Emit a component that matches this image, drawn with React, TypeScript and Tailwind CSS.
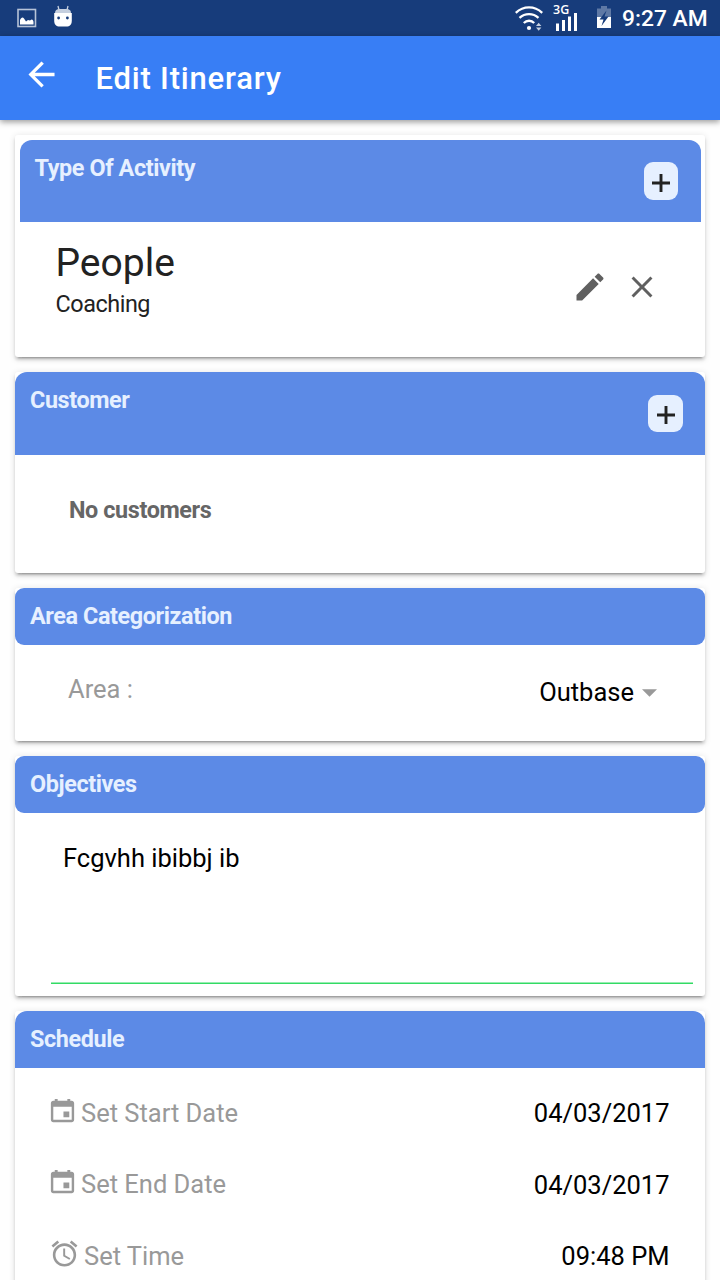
import type { ReactNode } from "react";
import { IoMdAlarm, IoMdArrowBack, IoMdCalendar, IoMdClose, IoMdCreate } from "react-icons/io";

function StatusBar() {
  return (
    <div className="flex h-9 shrink-0 items-start bg-[#173c7b] text-white">
      <svg className="ml-[17px] mt-2 h-5 w-5" viewBox="0 0 20 20">
        <rect x="1" y="1.5" width="17.5" height="17" fill="none" stroke="#b6c3d8" strokeWidth="1.6" />
        <path d="M3 16.500v-4.500c1-2 2.500-3.500 4-1.500l2 3 2-1.500 2 .5 1.500-1c1.500 0 2 1.500 2 2.500v2.500z" fill="#fff" />
      </svg>
      <svg className="ml-[16px] mt-[5px] h-[23px] w-5" viewBox="0 0 20 23">
        <path d="M5 1l1 4M15 1l-1 4" stroke="#c5cfdf" strokeWidth="1.300" />
        <path d="M2 8c0-3 2-4 4-4h8c2 0 4 1 4 4z" fill="#c5cfdf" />
        <path d="M1.200 8h17.600v7.500c0 4-2 6-5.500 6H6.700c-3.500 0-5.500-2-5.500-6z" fill="#fff" />
        <circle cx="5.600" cy="13" r="1.400" fill="#173c7b" />
        <circle cx="14.400" cy="13" r="1.400" fill="#173c7b" />
      </svg>
      <svg className="ml-auto mt-[5px] h-[26px] w-7" viewBox="0 0 28 26" fill="none" stroke="#fff" strokeWidth="2.300">
        <path d="M.8 7.800C8.500.6 19.500.6 27.200 7.800M4.500 12.800c5.500-5 13.500-5 19 0M8.800 18c3-3 7.500-3 10.400 0" />
        <circle cx="14" cy="23" r="2.100" fill="#fff" stroke="none" />
        <path d="M21 21l2.700-3.300 2.700 3.300zM21 22.500l2.700 3.300 2.700-3.300z" fill="#c5cfdf" stroke="none" />
      </svg>
      <div className="ml-[10px] mt-[3px] flex h-7 w-[26px] flex-col">
        <span className="font-['Open_Sans',sans-serif] text-[12.5px] font-semibold leading-[13px]">3G</span>
        <svg className="-mt-[3px] ml-[3px] h-[18px] w-[22px] shrink-0" viewBox="0 0 22 18">
          <path d="M0 10.500h3V18H0zM6 7h3v11H6zM12 3.500h3V18h-3zM18 0h3v18h-3z" fill="#fff" />
        </svg>
      </div>
      <svg className="ml-[18px] mt-[6px] h-[22px] w-[14px]" viewBox="0 0 14 22">
        <path d="M0 2.500h4V0h6v2.500h4V12H0z" fill="#5f79a5" />
        <path d="M0 11h14v11H0z" fill="#fff" />
        <path d="M9.500 4.500L2.500 13.500h4L4.500 20l7-9.500h-4z" fill="#173c7b" />
      </svg>
      <span className="ml-[11px] mr-3 w-[86px] whitespace-nowrap text-[22.8px] font-medium leading-[38px]">9:27 AM</span>
    </div>
  );
}

function Card({ className, children }: { className: string; children: ReactNode }) {
  return (
    <section
      className={`mx-[15px] flex shrink-0 flex-col rounded-[3px] bg-white shadow-[0_3px_3px_0_rgba(0,0,0,0.14),0_4.5px_1.5px_-3px_rgba(0,0,0,0.2),0_1.5px_7.500px_0_rgba(0,0,0,0.12)] ${className}`}
    >
      {children}
    </section>
  );
}

function CardTitle({ className, children }: { className: string; children: ReactNode }) {
  return (
    <div
      className={`flex shrink-0 justify-between bg-[#5c8ae6] pl-[15px] pt-[15px] text-[23.4px] font-bold leading-[26px] tracking-[-0.4px] text-[#e6f0ff] ${className}`}
    >
      {children}
    </div>
  );
}

function AddButton() {
  return (
    <button className="mt-[7.5px] mr-[22.5px] flex h-[37.5px] w-[34.5px] items-center justify-center rounded-[9px] bg-[#e6f0ff] pl-[1px] pt-[4px]">
      <svg className="h-[18px] w-[18px]" viewBox="0 0 18 18">
        <path d="M9 0v18M0 9h18" stroke="#222" strokeWidth="2.900" />
      </svg>
    </button>
  );
}

function ScheduleRow({
  icon,
  label,
  value,
  className,
  valueClassName,
}: {
  icon: ReactNode;
  label: string;
  value: string;
  className: string;
  valueClassName: string;
}) {
  return (
    <div className={`flex shrink-0 items-start justify-between pl-[32px] pr-[35.5px] ${className}`}>
      <div className="flex items-start text-[#999]">
        {icon}
        <span className="pt-[16px] leading-[31px]">{label}</span>
      </div>
      <span className={`leading-[31px] text-black ${valueClassName}`}>{value}</span>
    </div>
  );
}

export default function App() {
  return (
    <div className="flex h-[1280px] w-[720px] flex-col overflow-hidden bg-[#fefefe] font-[Roboto,sans-serif] text-[25.5px] text-[#222]">
      <StatusBar />
      <header className="flex h-[84px] shrink-0 items-center bg-[#387ef5] text-white shadow-[0_2px_6px_rgba(0,0,0,0.4)]">
        <IoMdArrowBack className="mb-[7px] ml-[22px] h-[39px] w-[39px]" />
        <h1 className="ml-[34.5px] pt-[1px] text-[31px] font-medium leading-9 tracking-[0.8px]">Edit Itinerary</h1>
      </header>

      <Card className="mt-[15px] h-[222px] p-[4.5px]">
        <CardTitle className="h-[82.5px] rounded-t-[12px]">
          <span>Type Of Activity</span>
          <AddButton />
        </CardTitle>
        <div className="flex items-start justify-between pl-[36px] pr-[41px]">
          <div className="pt-[18px]">
            <div className="text-[39px] leading-[46px]">People</div>
            <div className="text-[23.4px] leading-[36px] tracking-[-0.45px]">Coaching</div>
          </div>
          <div className="mt-[47px] flex gap-4 text-[#606060]">
            <IoMdCreate className="h-9 w-9" />
            <IoMdClose className="h-9 w-9" />
          </div>
        </div>
      </Card>

      <Card className="mt-[15px] h-[201px]">
        <CardTitle className="h-[82.5px] rounded-t-[12px]">
          <span>Customer</span>
          <AddButton />
        </CardTitle>
        <div className="pl-[54px] pt-[42px] text-[23.4px] font-bold leading-[26px] tracking-[-0.4px] text-[#666]">
          No customers
        </div>
      </Card>

      <Card className="mt-[15px] h-[153px]">
        <CardTitle className="h-[57px] rounded-[9px]">
          <span>Area Categorization</span>
        </CardTitle>
        <div className="flex items-start justify-between pl-[53px] pr-[48px] pt-[29px] leading-[31px]">
          <span className="text-[#999]">Area :</span>
          <div className="flex items-center pt-[3px] text-black">
            Outbase
            <svg className="ml-2 h-2 w-[15px]" viewBox="0 0 15 8">
              <path d="M0 .3h15L7.500 7.800z" fill="#999" />
            </svg>
          </div>
        </div>
      </Card>

      <Card className="mt-[15px] h-[240px]">
        <CardTitle className="h-[57px] rounded-[9px]">
          <span>Objectives</span>
        </CardTitle>
        <div className="ml-9 mr-3 flex h-[171px] flex-col">
          <div className="grow pl-3 pt-[30px] leading-[31px] text-black">Fcgvhh ibibbj ib</div>
          <div className="h-px bg-[#98edb1]" />
          <div className="h-px bg-[#32db64]" />
        </div>
      </Card>

      <Card className="mt-[15px] h-[420px]">
        <CardTitle className="mb-[14px] h-[57px] rounded-t-[12px]">
          <span>Schedule</span>
        </CardTitle>
        <ScheduleRow
          className="h-[71px]"
          valueClassName="pt-[16px]"
          icon={<IoMdCalendar className="mt-[13px] mr-[3px] h-[31px] w-[31px]" />}
          label="Set Start Date"
          value="04/03/2017"
        />
        <ScheduleRow
          className="h-[72px]"
          valueClassName="pt-[17px]"
          icon={<IoMdCalendar className="mt-[13px] mr-[3px] h-[31px] w-[31px]" />}
          label="Set End Date"
          value="04/03/2017"
        />
        <ScheduleRow
          className="h-[72px]"
          valueClassName="pt-[16px]"
          icon={<IoMdAlarm className="mt-[13px] ml-[1.5px] mr-[4.5px] h-[31px] w-[31px]" />}
          label="Set Time"
          value="09:48 PM"
        />
      </Card>
    </div>
  );
}
